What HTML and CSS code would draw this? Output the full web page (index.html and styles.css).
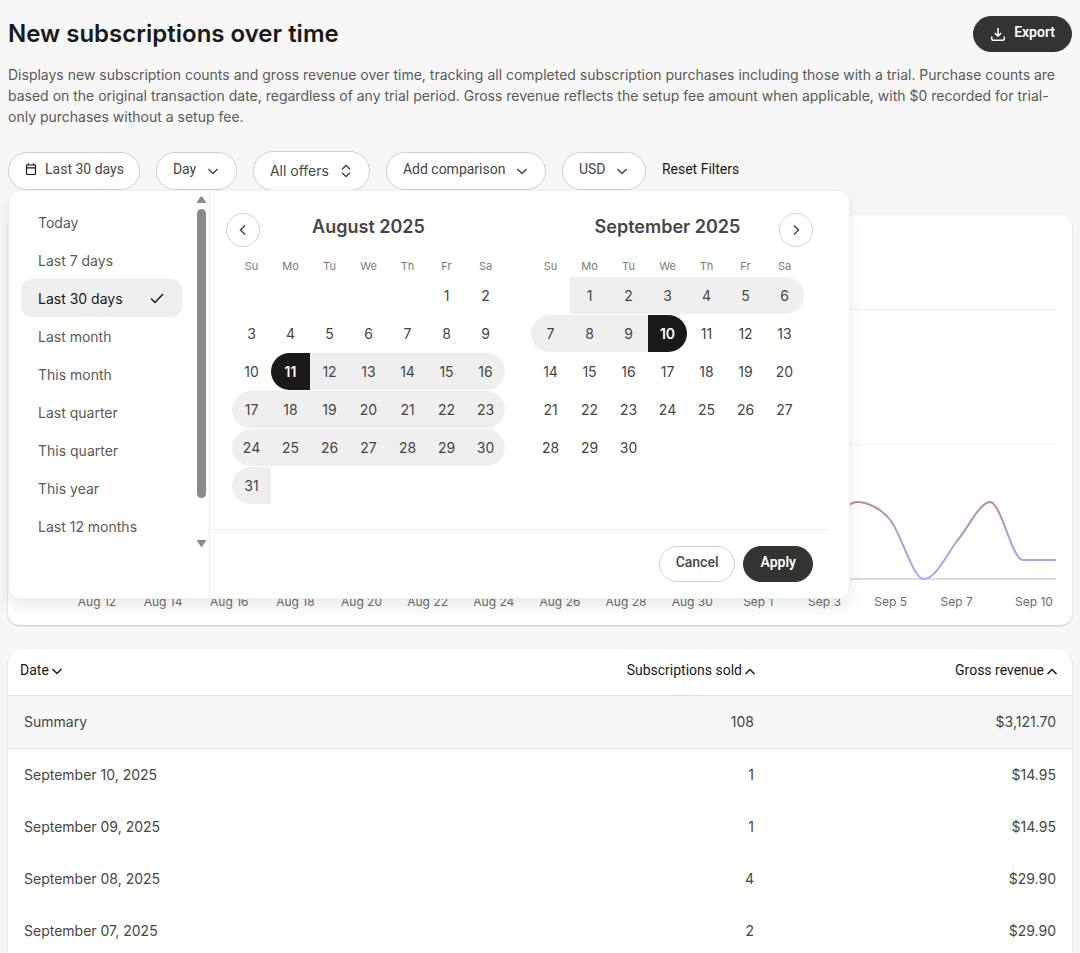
FILE: index.html
```html
<!DOCTYPE html>
<html lang="en">
<head>
  <meta charset="UTF-8" />
  <meta name="viewport" content="width=device-width, initial-scale=1.0" />
  <title>New subscriptions over time</title>
  <link rel="stylesheet" href="styles.css">
</head>
<body>
  <main class="report">
    <header class="report-header">
      <h1>New subscriptions over time</h1>
      <button class="btn btn-dark export" type="button">
        <svg width="16" height="16" viewBox="0 0 16 16"><path d="M8 2v8M4.800 7 8 10.200l3.200-3.200M1.700 10.500v2.200c0 .9.6 1.500 1.500 1.500h9.600c.9 0 1.500-.6 1.500-1.500v-2.200" /></svg>
        <span>Export</span>
      </button>
    </header>
    <p class="description">Displays new subscription counts and gross revenue over time, tracking all completed subscription purchases including those with a trial. Purchase counts are based on the original transaction date, regardless of any trial period. Gross revenue reflects the setup fee amount when applicable, with $0 recorded for trial-only purchases without a setup fee.</p>

    <!-- Filters -->
    <section class="filters">
      <button class="pill date-pill" type="button">
        <svg width="12" height="12" viewBox="0 0 12 12"><path d="M1.500 2h9v8.500a1 1 0 0 1-1 1h-7a1 1 0 0 1-1-1zM1.500 4.800h9M3.500.3v2.200M8.500.3v2.200" /></svg>
        Last 30 days
      </button>
      <label class="pill">
        <select aria-label="Interval"><option>Day</option></select>
        <svg width="16" height="16" viewBox="0 0 16 16"><path d="M3.500 6 8 10.500 12.500 6" /></svg>
      </label>
      <label class="pill pill-large">
        <select aria-label="Offers"><option>All offers</option></select>
        <svg width="16" height="16" viewBox="0 0 16 16"><path d="M4 6.200l4-3.700 4 3.700M4 9.800l4 3.700 4-3.700" /></svg>
      </label>
      <label class="pill">
        <select aria-label="Comparison"><option>Add comparison</option></select>
        <svg width="16" height="16" viewBox="0 0 16 16"><path d="M3.500 6 8 10.500 12.500 6" /></svg>
      </label>
      <label class="pill">
        <select aria-label="Currency"><option>USD</option></select>
        <svg width="16" height="16" viewBox="0 0 16 16"><path d="M3.500 6 8 10.500 12.500 6" /></svg>
      </label>
      <button class="reset" type="button">Reset Filters</button>

      <!-- Date picker -->
      <div class="picker">
        <div class="picker-side">
          <ul class="presets">
            <li><button type="button">Today</button></li>
            <li><button type="button">Last 7 days</button></li>
            <li><button type="button" class="active">Last 30 days
              <svg width="16" height="16" viewBox="0 0 16 16"><path d="m2 8.500 4 4L14 4" /></svg></button></li>
            <li><button type="button">Last month</button></li>
            <li><button type="button">This month</button></li>
            <li><button type="button">Last quarter</button></li>
            <li><button type="button">This quarter</button></li>
            <li><button type="button">This year</button></li>
            <li><button type="button">Last 12 months</button></li>
          </ul>
          <div class="scroll-lane">
            <svg width="9" height="7" viewBox="0 0 9 7"><path d="M4.500.8 8.200 6.200H.8z" /></svg>
            <div class="scroll-track"><div class="scroll-thumb"></div></div>
            <svg width="9" height="7" viewBox="0 0 9 7"><path d="M4.500 6.200.8.8h7.400z" /></svg>
          </div>
        </div>
        <div class="picker-main">
          <div class="months">
            <section class="month">
              <div class="month-head">
                <button class="nav-btn" type="button" aria-label="Previous month"><svg width="14" height="14" viewBox="0 0 14 14"><path d="M9 2.500 4.500 7 9 11.500" /></svg></button>
                <h2>August 2025</h2>
              </div>
              <table class="calendar" data-offset="5" data-days="31" data-from="11" data-to="31" data-edge="11"></table>
            </section>
            <section class="month">
              <div class="month-head month-head-next">
                <h2>September 2025</h2>
                <button class="nav-btn" type="button" aria-label="Next month"><svg width="14" height="14" viewBox="0 0 14 14"><path d="M5 2.500 9.500 7 5 11.500" /></svg></button>
              </div>
              <table class="calendar" data-offset="1" data-days="30" data-from="1" data-to="10" data-edge="10"></table>
            </section>
          </div>
          <div class="picker-actions">
            <button class="btn btn-light" type="button">Cancel</button>
            <button class="btn btn-dark" type="button">Apply</button>
          </div>
        </div>
      </div>
    </section>

    <!-- Chart -->
    <section class="card chart">
      <svg viewBox="0 0 1064 410" role="img" aria-label="New subscriptions per day">
        <defs>
          <linearGradient id="lineColor" gradientUnits="userSpaceOnUse" x1="0" y1="287" x2="0" y2="364">
            <stop offset="0" stop-color="#bf86a8" />
            <stop offset="1" stop-color="#a5aaff" />
          </linearGradient>
        </defs>
        <path class="grid-line" d="M72 94.500H1048M72 229.500H1048" />
        <path class="base-line" d="M72 364H1048" />
        <path class="line" stroke="url(#lineColor)" d="M816 326C827 306 838 287 849 287C860 287 874 294 883 306C894 321 905 364 916 364C927 364 938 341 949 326C960 313 972 287 982 287C993 287 1004 345 1015 345H1048" />
        <g id="chartLabels"></g>
      </svg>
    </section>

    <!-- Data -->
    <section class="card table-card">
      <table class="data">
        <thead>
          <tr>
            <th><button type="button">Date <svg width="12" height="12" viewBox="0 0 12 12"><path d="m1.500 4 4.500 4.500L10.500 4" /></svg></button></th>
            <th><button type="button">Subscriptions sold <svg width="12" height="12" viewBox="0 0 12 12"><path d="M1.500 9 6 4.500 10.500 9" /></svg></button></th>
            <th><button type="button">Gross revenue <svg width="12" height="12" viewBox="0 0 12 12"><path d="M1.500 9 6 4.500 10.500 9" /></svg></button></th>
          </tr>
        </thead>
        <tbody>
          <tr class="summary"><td>Summary</td><td>108</td><td>$3,121.70</td></tr>
          <tr><td>September 10, 2025</td><td>1</td><td>$14.95</td></tr>
          <tr><td>September 09, 2025</td><td>1</td><td>$14.95</td></tr>
          <tr><td>September 08, 2025</td><td>4</td><td>$29.90</td></tr>
          <tr><td>September 07, 2025</td><td>2</td><td>$29.90</td></tr>
        </tbody>
      </table>
    </section>
  </main>

  <script>
    const weekdays = ["Su", "Mo", "Tu", "We", "Th", "Fr", "Sa"];

    function renderCalendar(table) {
      const offset = Number(table.dataset.offset);
      const days = Number(table.dataset.days);
      const from = Number(table.dataset.from);
      const to = Number(table.dataset.to);
      const edge = Number(table.dataset.edge);
      let html = "<thead><tr>" + weekdays.map(d => "<th>" + d + "</th>").join("") + "</tr></thead><tbody>";
      for (let start = 1 - offset; start <= days; start += 7) {
        html += "<tr>";
        for (let col = 0; col < 7; col++) {
          const day = start + col;
          if (day < 1 || day > days) {
            html += "<td></td>";
            continue;
          }
          const classes = [];
          if (day >= from && day <= to) classes.push("in-range");
          if (day === edge) classes.push(edge === from ? "range-start" : "range-end");
          html += '<td><button type="button" class="' + classes.join(" ") + '">' + day + "</button></td>";
        }
        html += "</tr>";
      }
      table.innerHTML = html + "</tbody>";
    }

    function renderLabels() {
      const labels = ["Aug 12", "Aug 14", "Aug 16", "Aug 18", "Aug 20", "Aug 22", "Aug 24", "Aug 26", "Aug 28", "Aug 30", "Sep 1", "Sep 3", "Sep 5", "Sep 7"];
      const step = 66.13;
      let html = labels.map((text, i) => '<text x="' + (89 + i * step).toFixed(1) + '" y="391">' + text + "</text>").join("");
      html += '<text x="1026" y="391">Sep 10</text>';
      document.getElementById("chartLabels").innerHTML = html;
    }

    document.querySelectorAll(".calendar").forEach(renderCalendar);
    renderLabels();
  </script>
</body>
</html>
```

FILE: styles.css
```css
* {
  box-sizing: border-box;
}
body {
  margin: 0;
  height: 100vh;
  overflow: hidden;
  background: #f7f7f7;
  color: #464644;
  font-family: Inter, "Liberation Sans", sans-serif;
  font-size: 14px;
}
button, select {
  font: inherit;
  color: inherit;
  background: none;
  border: none;
  padding: 0;
  cursor: pointer;
}
svg {
  flex: none;
  fill: none;
  stroke: currentColor;
  stroke-width: 1.5;
}
h1, h2, p, ul {
  margin: 0;
}
.report {
  padding: 16px 8px 0;
}
.report-header {
  display: flex;
  justify-content: space-between;
  align-items: center;
}
h1 {
  font-size: 24px;
  font-weight: 600;
  line-height: 36px;
  color: #191918;
}
.description {
  margin-top: 12px;
  line-height: 21px;
  color: #5a5a58;
}

/* Buttons */
.btn {
  height: 36px;
  padding: 0 16px 4px;
  border: 1px solid #333331;
  border-radius: 18px;
  font-family: Roboto, Inter, sans-serif;
  font-weight: 500;
}
.btn-dark {
  background: #333331;
  color: #fff;
  font-weight: 600;
}
.btn-light {
  background: #fff;
  border-color: #d0d0ce;
}
.export {
  display: flex;
  align-items: center;
  gap: 8px;
  padding-bottom: 0;
}
.export span {
  padding-bottom: 4px;
}

/* Filters */
.filters {
  position: relative;
  display: flex;
  align-items: center;
  gap: 16px;
  height: 40px;
  margin-top: 24px;
}
.pill {
  display: flex;
  align-items: center;
  gap: 8px;
  height: 38px;
  padding: 0 15px 0 16px;
  background: #fff;
  border: 1px solid #d0d0ce;
  border-radius: 20px;
  font-family: Roboto, Inter, sans-serif;
}
.pill select {
  appearance: none;
  padding-bottom: 4px;
}
.pill-large {
  height: 40px;
  font-family: Inter, sans-serif;
}
.pill-large select {
  padding-bottom: 1px;
}
.date-pill {
  padding-bottom: 4px;
}
.date-pill svg {
  color: #191918;
  stroke-width: 1.2;
}
.reset {
  padding-bottom: 4px;
  font-family: Roboto, Inter, sans-serif;
  color: #191918;
}

/* Date picker */
.picker {
  position: absolute;
  top: 39px;
  left: 0;
  z-index: 2;
  display: flex;
  height: 409px;
  background: #fff;
  border: 1px solid #efefef;
  border-radius: 12px;
  box-shadow: 0 8px 16px rgba(0, 0, 0, 0.08);
}
.picker-side {
  display: flex;
  align-items: flex-start;
  width: 201px;
  border-right: 1px solid #ececec;
}
.presets {
  flex: 1;
  padding: 12px;
  list-style: none;
}
.presets button {
  display: flex;
  justify-content: space-between;
  align-items: center;
  width: 100%;
  height: 38px;
  padding: 0 17px;
  border-radius: 10px;
  color: #5a5a58;
}
.presets .active {
  background: #efefef;
  color: #191918;
}
.scroll-lane {
  display: flex;
  flex-direction: column;
  align-items: center;
  gap: 6px;
  width: 15px;
  height: 360px;
  padding: 5px 0 4px;
  color: #8b8b8b;
}
.scroll-lane svg {
  fill: currentColor;
}
.scroll-track {
  flex: 1;
}
.scroll-thumb {
  width: 9px;
  height: 289px;
  border-radius: 5px;
  background: #8b8b8b;
}
.picker-main {
  width: 639px;
}
.months {
  display: flex;
  gap: 26px;
  height: 339px;
  margin-right: 20px;
  padding: 22px 0 0 22px;
  border-bottom: 1px solid #ececec;
}
.month {
  flex: none;
  width: 273px;
}
.month-head {
  position: relative;
  height: 34px;
}
.month-head h2 {
  text-align: center;
  font-size: 18px;
  font-weight: 600;
  line-height: 28px;
  color: #464644;
}
.nav-btn {
  position: absolute;
  top: 0;
  left: -6px;
  display: flex;
  justify-content: center;
  align-items: center;
  width: 34px;
  height: 34px;
  border: 1px solid #d0d0ce;
  border-radius: 50%;
}
.month-head-next .nav-btn {
  left: auto;
  right: -9px;
}
.calendar {
  width: 100%;
  table-layout: fixed;
  border-spacing: 0 1px;
}
.calendar th {
  height: 28px;
  padding: 7px 0 0;
  font-size: 11px;
  font-weight: 400;
  color: #7b7b79;
}
.calendar td {
  height: 37px;
  padding: 0;
}
.calendar button {
  display: block;
  width: 100%;
  height: 37px;
}
.calendar .in-range {
  background: #efefef;
}
.calendar td:first-child .in-range {
  border-radius: 19px 0 0 19px;
}
.calendar td:last-child .in-range {
  border-radius: 0 19px 19px 0;
}
.calendar .range-start, .calendar .range-end {
  background: #191918;
  color: #fff;
  font-weight: 600;
}
.calendar .range-start {
  border-radius: 19px 0 0 19px;
}
.calendar .range-end {
  border-radius: 0 19px 19px 0;
}
.picker-actions {
  display: flex;
  justify-content: flex-end;
  gap: 8px;
  padding: 16px 36px;
}

/* Cards */
.card {
  background: #fff;
  border-radius: 12px;
  box-shadow: 0 1px 2px rgba(0, 0, 0, 0.2);
}
.chart {
  margin-top: 24px;
}
.chart svg {
  display: block;
  width: 100%;
}
.grid-line {
  stroke: #f1f1f1;
  stroke-width: 1;
}
.base-line {
  stroke: #dcdcdc;
  stroke-width: 2;
}
.line {
  stroke-width: 2;
}
.chart text {
  fill: #6b6b69;
  stroke: none;
  font-size: 12px;
  text-anchor: middle;
}
.table-card {
  margin-top: 24px;
  padding-bottom: 16px;
  border-radius: 16px;
  overflow: hidden;
}
.data {
  width: 100%;
  table-layout: fixed;
  border-collapse: collapse;
}
.data th {
  height: 46px;
  padding: 0 14px 4px 12px;
  text-align: right;
}
.data th button {
  display: inline-flex;
  align-items: center;
  gap: 2px;
  font-family: Roboto, Inter, sans-serif;
  font-weight: 400;
  color: #191918;
}
.data th svg {
  margin-top: 2px;
}
.data td {
  height: 52px;
  padding: 0 16px;
  text-align: right;
}
.data th:first-child, .data td:first-child {
  text-align: left;
}
.data th:nth-child(2) {
  width: 302px;
}
.data th:last-child {
  width: 302px;
}
.summary {
  background: #f7f7f7;
  border-top: 1px solid #e0e0e0;
  border-bottom: 1px solid #e0e0e0;
}
.data .summary td {
  height: 53px;
}
```
